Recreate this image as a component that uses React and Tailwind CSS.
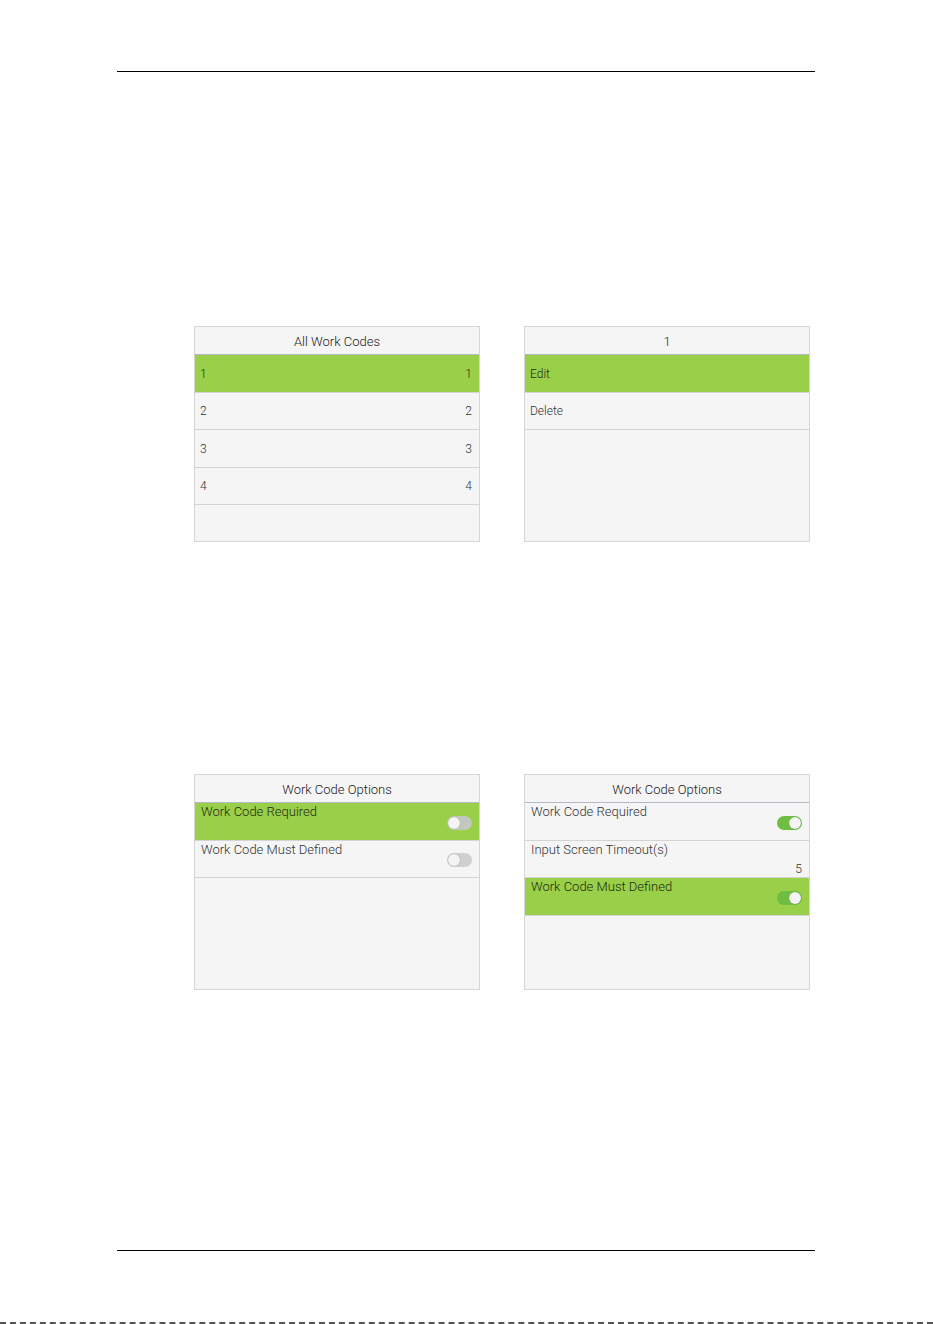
const font = { fontFamily: 'Roboto, "Liberation Sans", sans-serif' };

function Toggle({ on, active }) {
  const track = on ? 'bg-[#6fbd42] justify-end' : active ? 'bg-[#c3c8bd] justify-start' : 'bg-[#cfcfcf] justify-start';
  return (
    <div className={`flex h-[14px] w-[25px] items-center rounded-full px-px ${track}`}>
      <div className="h-[12px] w-[12px] rounded-full bg-[#f4f4f4] shadow-[0_0_1px_rgba(0,0,0,0.35)]" />
    </div>
  );
}

function Panel({ title, children }) {
  return (
    <div className="flex h-[216px] w-[286px] flex-col border border-[#d6d6d6] bg-[#f5f5f5]">
      <div className="flex h-[28px] shrink-0 items-center justify-center border-b border-[#b4bbc6] pt-[3px] text-[13px] font-light text-[#1b1b1b]">
        {title}
      </div>
      {children}
    </div>
  );
}

function ListRow({ left, right, active }) {
  return (
    <div
      className={`flex h-[37.5px] shrink-0 items-center justify-between border-b border-[#d4d4d4] pl-[5px] pr-[7px] pt-px text-[12px] font-light ${
        active ? 'bg-[#9acf4a] text-[#1e2a10]' : 'text-[#333]'
      }`}
    >
      <span>{left}</span>
      {right && <span>{right}</span>}
    </div>
  );
}

function OptionRow({ label, toggle, value, active }) {
  return (
    <div
      className={`flex h-[37.5px] shrink-0 items-start justify-between border-b border-[#d4d4d4] pl-[6px] pr-[7px] pt-px text-[13px] font-light ${
        active ? 'bg-[#9acf4a] text-[#1e2a10]' : 'text-[#333]'
      }`}
    >
      <span className="leading-[16px]">{label}</span>
      {toggle !== undefined && (
        <div className="mb-[10px] self-end">
          <Toggle on={toggle} active={active} />
        </div>
      )}
      {value && <span className="mb-[1px] self-end text-[12px] leading-[13px]">{value}</span>}
    </div>
  );
}

export default function App() {
  return (
    <div className="flex h-[1324px] w-full flex-col bg-white" style={font}>
      <div className="ml-[117px] mt-[71px] h-px w-[698px] bg-black" />

      {/* list screens */}
      <div className="ml-[117px] mt-[254px] flex w-[698px] gap-[44px] pl-[77px]">
        <Panel title="All Work Codes">
          <ListRow left="1" right="1" active />
          <ListRow left="2" right="2" />
          <ListRow left="3" right="3" />
          <ListRow left="4" right="4" />
        </Panel>
        <Panel title="1">
          <ListRow left="Edit" active />
          <ListRow left="Delete" />
        </Panel>
      </div>

      {/* options screens */}
      <div className="ml-[117px] mt-[232px] flex w-[698px] gap-[44px] pl-[77px]">
        <Panel title="Work Code Options">
          <OptionRow label="Work Code Required" toggle={false} active />
          <OptionRow label="Work Code Must Defined" toggle={false} />
        </Panel>
        <Panel title="Work Code Options">
          <OptionRow label="Work Code Required" toggle={true} />
          <OptionRow label="Input Screen Timeout(s)" value="5" />
          <OptionRow label="Work Code Must Defined" toggle={true} active />
        </Panel>
      </div>

      <div className="ml-[117px] mt-[260px] h-px w-[698px] bg-black" />

      <div className="mt-auto h-[2px] w-full border-b-2 border-dashed border-[#555]" />
    </div>
  );
}
